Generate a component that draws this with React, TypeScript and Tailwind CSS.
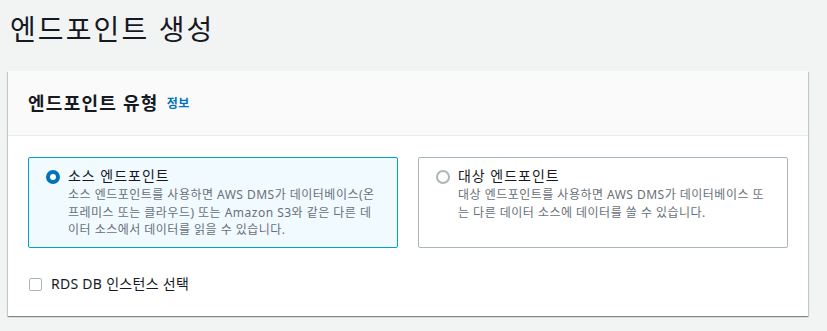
import { useState } from 'react'

type Option = {
  id: string
  title: string
  description: string
}

const options: Option[] = [
  {
    id: 'source',
    title: '소스 엔드포인트',
    description:
      '소스 엔드포인트를 사용하면 AWS DMS가 데이터베이스(온프레미스 또는 클라우드) 또는 Amazon S3와 같은 다른 데이터 소스에서 데이터를 읽을 수 있습니다.',
  },
  {
    id: 'target',
    title: '대상 엔드포인트',
    description:
      '대상 엔드포인트를 사용하면 AWS DMS가 데이터베이스 또는 다른 데이터 소스에 데이터를 쓸 수 있습니다.',
  },
]

export default function App() {
  const [selected, setSelected] = useState('source')
  const [rds, setRds] = useState(false)

  return (
    <div
      className="min-h-screen bg-[#f2f3f3] pl-2 text-[#16191f]"
      style={{ fontFamily: '"Noto Sans", "Noto Sans CJK KR", sans-serif' }}
    >
      <h1 className="pl-[2px] pt-[7px] pb-[20px] text-[28px] leading-[44px] font-normal tracking-[0.075em]">
        엔드포인트 생성
      </h1>

      <div className="w-[800px] bg-white shadow-[0_1px_1px_0_rgba(0,28,36,0.3),1px_1px_1px_0_rgba(0,28,36,0.15),-1px_1px_1px_0_rgba(0,28,36,0.15)]">
        {/* Header */}
        <div className="flex h-[65px] items-center gap-[8px] border-b border-[#eaeded] bg-[#fafafa] px-5">
          <h2 className="text-[18px] leading-6 font-bold tracking-[0.07em]">엔드포인트 유형</h2>
          <a className="mt-[2px] text-[12px] font-bold text-[#0073bb] tracking-[0.05em]">정보</a>
        </div>

        {/* Body */}
        <div className="px-5 pt-[21px] pb-[22px]">
          <div className="grid grid-cols-2 gap-5">
            {options.map(o => {
              const isSel = o.id === selected
              return (
                <button
                  key={o.id}
                  onClick={() => setSelected(o.id)}
                  className={`flex h-[91px] items-start gap-[8px] rounded-[2px] border pl-[17px] pr-[18px] pt-[8px] text-left ${
                    isSel ? 'border-[#00a1c9] bg-[#f1faff]' : 'border-[#aab7b8] bg-white'
                  }`}
                >
                  <span
                    className={`mt-[4px] h-[14px] w-[14px] shrink-0 rounded-full ${
                      isSel ? 'border-[4px] border-[#0073bb] bg-white' : 'border-[2px] border-[#aab7b8] bg-white'
                    }`}
                  />
                  <span className="flex flex-col">
                    <span className="text-[14px] leading-[20px] text-[#16191f] tracking-[0.07em]">{o.title}</span>
                    <span className="break-all text-[12px] leading-[17.5px] text-[#687078] tracking-[0.04em]">
                      {o.description}
                    </span>
                  </span>
                </button>
              )
            })}
          </div>

          <label className="mt-[26px] flex items-center gap-[9px] pl-[1px]">
            <input
              type="checkbox"
              checked={rds}
              onChange={e => setRds(e.target.checked)}
              className="h-[13px] w-[13px] appearance-none rounded-[2px] border border-[#aab7b8] bg-white"
            />
            <span className="text-[14px] leading-5 tracking-[0.02em]">RDS DB 인스턴스 선택</span>
          </label>
        </div>
      </div>
    </div>
  )
}
